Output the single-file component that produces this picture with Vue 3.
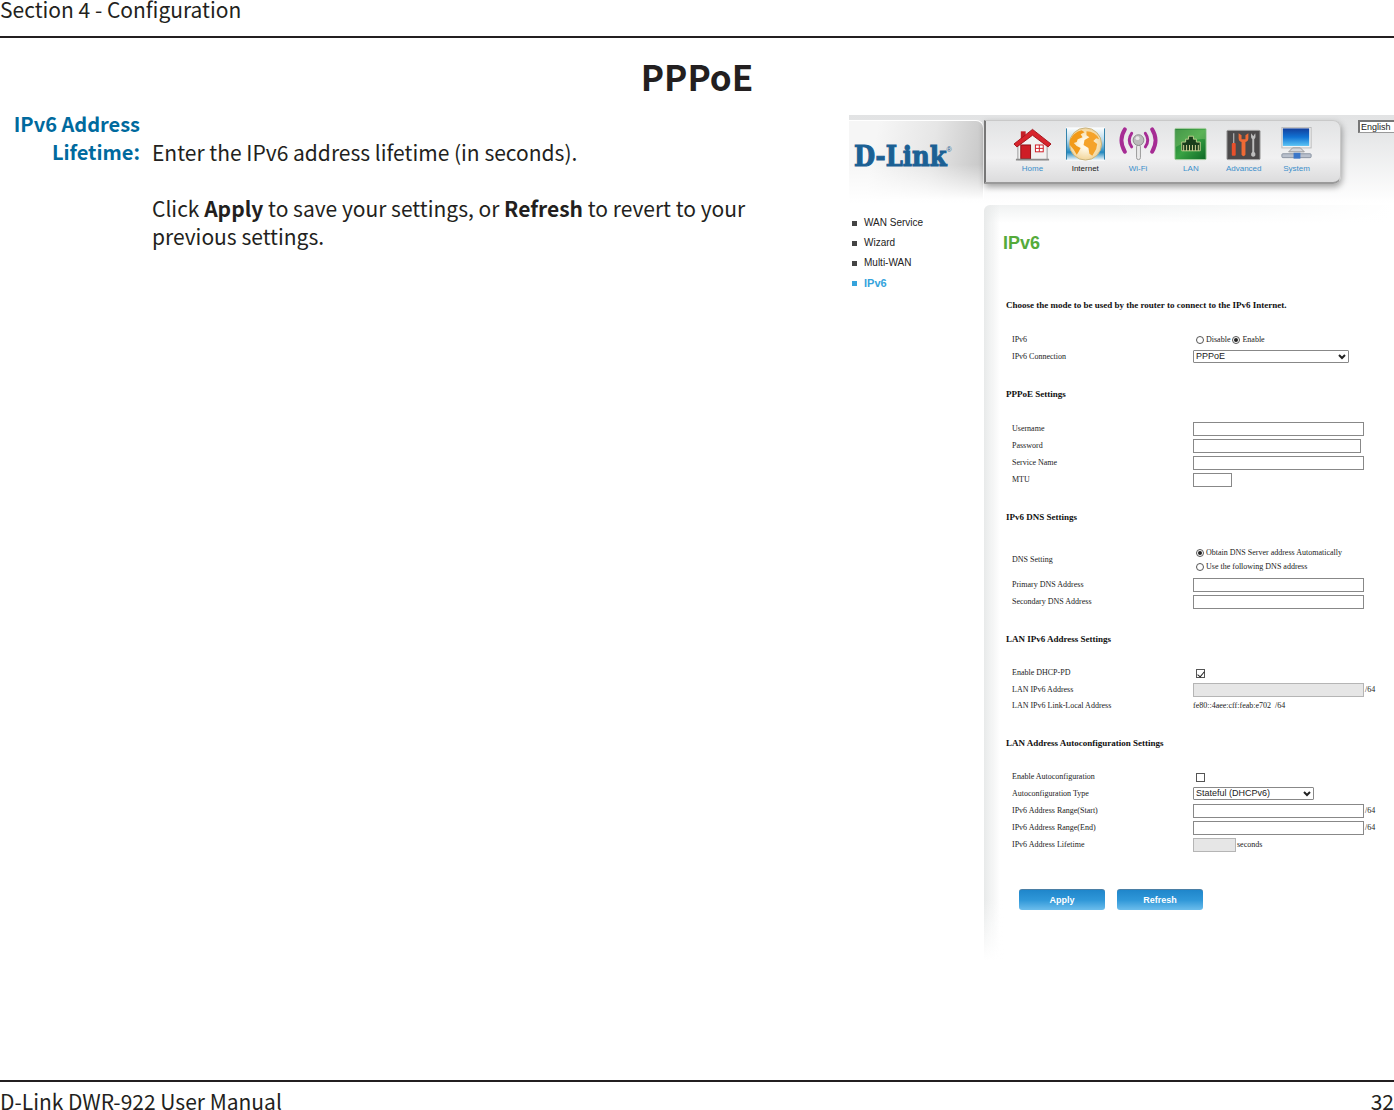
<script setup>
import { ref } from 'vue'

const menu = [
  { id: 'home', label: 'Home' },
  { id: 'internet', label: 'Internet', active: true },
  { id: 'wifi', label: 'Wi-Fi' },
  { id: 'lan', label: 'LAN' },
  { id: 'advanced', label: 'Advanced' },
  { id: 'system', label: 'System' },
]

const side = [
  { label: 'WAN Service' },
  { label: 'Wizard' },
  { label: 'Multi-WAN' },
  { label: 'IPv6', active: true },
]

const ipv6 = ref('enable')
const dns = ref('auto')
const dhcpPd = ref(true)
const autoconf = ref(false)
</script>

<template>
  <div class="page">
    <header class="page-head">Section 4 - Configuration</header>

    <h1 class="title">PPPoE</h1>

    <main class="body">
      <dl class="help">
        <dt>IPv6 Address Lifetime:</dt>
        <dd>
          <p>Enter the IPv6 address lifetime (in seconds).</p>
          <p>
            Click <strong>Apply</strong> to save your settings, or
            <strong>Refresh</strong> to revert to your previous settings.
          </p>
        </dd>
      </dl>

      <section class="router">
        <div class="banner">
          <div class="brand"><span class="brand-name">D-Link</span><span class="reg">®</span></div>
          <nav class="menu">
            <a v-for="m in menu" :key="m.id" href="#" :class="['menu-item', { on: m.active }]">
              <svg v-if="m.id === 'home'" viewBox="0 0 40 34" class="ico">
                <path d="M5 17 L20 5 L35 17 V33 H5Z" fill="#f1f1f1" stroke="#999" stroke-width="1" />
                <path d="M8 4h5v8H8z" fill="#c51f27" />
                <path d="M1 17 L20 2 L39 17 L36 20 L20 8 L4 20Z" fill="#d8232c" stroke="#a3161d" stroke-width="1" />
                <rect x="8" y="18" width="10" height="14" fill="#cf1d26" stroke="#8f1016" />
                <rect x="23" y="18" width="8" height="7" fill="#fff" stroke="#cf1d26" />
                <path d="M27 18v7M23 21.500h8" stroke="#cf1d26" fill="none" />
                <path d="M3 33h34" stroke="#8b8b8b" stroke-width="2" />
              </svg>
              <svg v-else-if="m.id === 'internet'" viewBox="0 0 40 34" class="ico">
                <defs>
                  <linearGradient id="sea" x1="0" y1="0" x2="0" y2="1">
                    <stop offset="0" stop-color="#fff" /><stop offset=".4" stop-color="#b5d8ea" /><stop offset=".75" stop-color="#2389c0" /><stop offset="1" stop-color="#fff" />
                  </linearGradient>
                  <radialGradient id="globe"><stop offset=".3" stop-color="#fff8e6" /><stop offset="1" stop-color="#f2d59a" /></radialGradient>
                </defs>
                <rect x="0" y="0" width="40" height="34" fill="url(#sea)" />
                <path d="M.5 1v32M39.500 1v32" stroke="#2c7ea9" />
                <circle cx="20" cy="17" r="16.500" fill="url(#globe)" stroke="#c9b27b" />
                <path d="M4 13 Q8 5 16 3 L19 5 15 7 17 10 12 12 11 15 8 16 11 19 15 21 13 25 11 28 8 23 4 18Z" fill="#f29a18" />
                <path d="M21 4 Q30 4 34 12 L31 11 28 14 32 17 31 22 27 29 24 27 23 21 18 18 19 13 24 10 21 8Z" fill="#f5a32a" />
              </svg>
              <svg v-else-if="m.id === 'wifi'" viewBox="0 0 40 34" class="ico">
                <g fill="none" stroke="#a62c94" stroke-linecap="round">
                  <path d="M13 6 Q8 13 13 20" stroke-width="3" /><path d="M27 6 Q32 13 27 20" stroke-width="3" />
                  <path d="M6 2 Q-1 13 6 25" stroke-width="4" /><path d="M34 2 Q41 13 34 25" stroke-width="4" />
                </g>
                <rect x="18" y="18" width="4" height="15" rx="2" fill="#e9e9e9" stroke="#999" />
                <circle cx="20" cy="13" r="5.500" fill="#bcbcbc" stroke="#8c8c8c" />
                <circle cx="19" cy="11" r="2" fill="#e8e8e8" />
              </svg>
              <svg v-else-if="m.id === 'lan'" viewBox="0 0 40 34" class="ico">
                <defs>
                  <linearGradient id="port" x1="0" y1="0" x2="1" y2="1">
                    <stop offset="0" stop-color="#15752c" /><stop offset=".5" stop-color="#39a243" /><stop offset="1" stop-color="#0d6825" />
                  </linearGradient>
                </defs>
                <rect x="4" y="1" width="32" height="32" rx="1" fill="url(#port)" stroke="#a8cfa0" />
                <path d="M5 2h30v10Q20 11 5 20Z" fill="#9ed37a" opacity=".35" />
                <path d="M11 24V15h4v-3h3V9h5v3h3v3h4v9Z" fill="#193d1c" stroke="#b9cf8a" />
                <path d="M13 24v-6M16 24v-6M19 24v-6M22 24v-6M25 24v-6M28 24v-6" stroke="#d8d79a" stroke-width="1" />
              </svg>
              <svg v-else-if="m.id === 'advanced'" viewBox="0 0 40 34" class="ico">
                <rect x="3" y="3" width="34" height="30" rx="1" fill="#4c4a4b" stroke="#a5a5a5" />
                <path d="M10 6v11" stroke="#ccc" stroke-width="1" /><rect x="8" y="16" width="4" height="13" rx="1" fill="#e8502b" />
                <path d="M15 6v5q0 3 3 4v13q2 3 4 0V15q3-1 3-4V6l-3 2v4h-4V8Z" fill="#ef6a35" />
                <path d="M28 6q-1 5 1 6v13q-2 2-1 4 2 2 4 0 1-2-1-4V12q2-1 1-6l-2 3Z" fill="#bdbdbd" />
              </svg>
              <svg v-else viewBox="0 0 40 34" class="ico">
                <defs>
                  <linearGradient id="screen" x1="0" y1="0" x2="0" y2="1">
                    <stop offset="0" stop-color="#123f9c" /><stop offset=".5" stop-color="#1173d4" /><stop offset="1" stop-color="#5cc4f4" />
                  </linearGradient>
                </defs>
                <rect x="5" y="0" width="30" height="21" fill="#f3f3f3" stroke="#bbb" />
                <rect x="6" y="1" width="27" height="18" fill="url(#screen)" />
                <path d="M16 21h8l4 4H12Z" fill="#d5d7dc" stroke="#999" />
                <rect x="5" y="27" width="30" height="4" rx="1" fill="#b9c0cc" stroke="#8b94a2" />
                <rect x="17" y="26" width="7" height="6" fill="#3d77c8" />
              </svg>
              <span>{{ m.label }}</span>
            </a>
          </nav>
          <div class="lang">
            <select aria-label="Language"><option>English</option></select>
          </div>
        </div>

        <div class="columns">
          <ul class="side">
            <li v-for="s in side" :key="s.label" :class="{ on: s.active }">
              <a href="#">{{ s.label }}</a>
            </li>
          </ul>

          <form class="panel" @submit.prevent>
            <h2>IPv6</h2>

            <h3>Choose the mode to be used by the router to connect to the IPv6 Internet.</h3>
            <div class="row">
              <span class="name">IPv6</span>
              <span class="choice">
                <label><input v-model="ipv6" type="radio" name="ipv6" value="disable" />Disable</label>
                <label><input v-model="ipv6" type="radio" name="ipv6" value="enable" />Enable</label>
              </span>
            </div>
            <div class="row">
              <label class="name" for="conn">IPv6 Connection</label>
              <span class="drop drop-wide">
                <select id="conn"><option>PPPoE</option></select>
                <svg viewBox="0 0 9 7"><path d="M1 2l3 3 3-3" /></svg>
              </span>
            </div>

            <h3>PPPoE Settings</h3>
            <div class="row"><label class="name" for="user">Username</label><input id="user" type="text" class="box" /></div>
            <div class="row"><label class="name" for="pass">Password</label><input id="pass" type="password" class="box box-pass" /></div>
            <div class="row"><label class="name" for="svc">Service Name</label><input id="svc" type="text" class="box" /></div>
            <div class="row"><label class="name" for="mtu">MTU</label><input id="mtu" type="text" class="box box-mtu" /></div>

            <h3>IPv6 DNS Settings</h3>
            <div class="row row-dns">
              <span class="name">DNS Setting</span>
              <span class="choice stacked">
                <label><input v-model="dns" type="radio" name="dns" value="auto" />Obtain DNS Server address Automatically</label>
                <label><input v-model="dns" type="radio" name="dns" value="manual" />Use the following DNS address</label>
              </span>
            </div>
            <div class="row"><label class="name" for="dns1">Primary DNS Address</label><input id="dns1" type="text" class="box" /></div>
            <div class="row"><label class="name" for="dns2">Secondary DNS Address</label><input id="dns2" type="text" class="box" /></div>

            <h3>LAN IPv6 Address Settings</h3>
            <div class="row short"><label class="name" for="pd">Enable DHCP-PD</label><input id="pd" v-model="dhcpPd" type="checkbox" /></div>
            <div class="row"><label class="name" for="lan6">LAN IPv6 Address</label><input id="lan6" type="text" class="box" disabled /><span class="unit">/64</span></div>
            <div class="row short"><span class="name">LAN IPv6 Link-Local Address</span><span>fe80::4aee:cff:feab:e702&nbsp; /64</span></div>

            <h3>LAN Address Autoconfiguration Settings</h3>
            <div class="row short"><label class="name" for="auto">Enable Autoconfiguration</label><input id="auto" v-model="autoconf" type="checkbox" /></div>
            <div class="row">
              <label class="name" for="type">Autoconfiguration Type</label>
              <span class="drop">
                <select id="type"><option>Stateful (DHCPv6)</option></select>
                <svg viewBox="0 0 9 7"><path d="M1 2l3 3 3-3" /></svg>
              </span>
            </div>
            <div class="row"><label class="name" for="start">IPv6 Address Range(Start)</label><input id="start" type="text" class="box" /><span class="unit">/64</span></div>
            <div class="row"><label class="name" for="end">IPv6 Address Range(End)</label><input id="end" type="text" class="box" /><span class="unit">/64</span></div>
            <div class="row"><label class="name" for="life">IPv6 Address Lifetime</label><input id="life" type="text" class="box box-life" disabled /><span class="unit">seconds</span></div>

            <div class="actions">
              <button type="submit">Apply</button>
              <button type="button">Refresh</button>
            </div>
          </form>
        </div>
      </section>
    </main>

    <footer class="page-foot"><span>D-Link DWR-922 User Manual</span><span>32</span></footer>
  </div>
</template>

<style>
body {
  margin: 0;
  background: #fff;
}
</style>

<style scoped>
* {
  box-sizing: border-box;
}
.page {
  display: flex;
  flex-direction: column;
  min-height: 100vh;
  overflow: hidden;
  color: #231f20;
  font: 21px/28px "Noto Sans CJK SC", "Open Sans", sans-serif;
}
.page-head {
  height: 38px;
  line-height: 18px;
  border-bottom: 2px solid #231f20;
}
.title {
  margin: 18px 0 14px;
  font-size: 35px;
  line-height: 40px;
  font-weight: 700;
  text-align: center;
}
.body {
  display: grid;
  grid-template-columns: 1fr 545px;
  flex: 1;
}
.help {
  display: grid;
  grid-template-columns: 140px 1fr;
  column-gap: 12px;
  align-content: start;
  margin: 0;
  padding-right: 90px;
}
.help dt {
  color: #006a9e;
  font-size: 20px;
  font-weight: 700;
  text-align: right;
}
.help dd {
  margin: 28px 0 0;
}
.help p {
  margin: 0 0 28px;
}
.page-foot {
  display: flex;
  justify-content: space-between;
  height: 30px;
  padding-top: 5px;
  border-top: 2px solid #231f20;
  line-height: 28px;
}

/* router web page */
.router {
  padding-top: 5px;
  font: 8px/12px "Liberation Serif", serif;
  color: #222;
}
.router a {
  color: inherit;
  text-decoration: none;
}
.banner {
  display: flex;
  align-items: flex-start;
  height: 90px;
  padding-top: 5px;
  background: linear-gradient(#e2e3e4 0, #e6e7e8 20px, #fff 88px);
  font-family: "Liberation Sans", sans-serif;
}
.brand {
  display: flex;
  width: 135px;
  height: 80px;
  padding: 20px 0 0 5px;
  border-top: 1px solid #fff;
  border-right: 1px solid #fff;
  border-top-right-radius: 8px;
  background:
    linear-gradient(rgba(255, 255, 255, 0) 55%, #fff),
    linear-gradient(100deg, #f6f6f6 20%, #e6e6e6 60%, #c4c4c4);
  color: #1b6094;
}
.brand-name {
  font: bold 27px/32px "DejaVu Serif Condensed", "DejaVu Serif", serif;
  -webkit-text-stroke: 1px #1b6094;
}
.reg {
  font-size: 7px;
  line-height: 18px;
}
.menu {
  display: flex;
  width: 357px;
  height: 64px;
  padding: 5px 17px 0 20px;
  border: 1px solid #c9c9c9;
  border-left: 2px solid #777;
  border-bottom: 2px solid #9a9a9a;
  border-radius: 0 8px 8px 0;
  background: linear-gradient(#e2e3e4, #f1f1f2 60%, #dcdcdd);
  box-shadow: 1px 3px 6px rgba(0, 0, 0, 0.35);
}
.menu-item {
  display: flex;
  flex: 1;
  flex-direction: column;
  align-items: center;
  line-height: 16px;
}
.router .menu-item {
  color: #3b8fcb;
}
.router .menu-item.on {
  color: #222;
}
.ico {
  width: 39px;
  height: 34px;
  margin-top: 1px;
}
.lang {
  flex: 1;
  margin-left: 17px;
  overflow: hidden;
}
.lang select {
  display: block;
  width: 60px;
  height: 13px;
  padding: 0 1px;
  border: 1px solid #999;
  border-top: 2px solid #777;
  border-left: 2px solid #777;
  border-radius: 0;
  background: #fff;
  appearance: none;
  font: 9px/10px "Liberation Sans", sans-serif;
  color: #222;
}
.columns {
  display: flex;
}
.side {
  width: 135px;
  margin: 0;
  padding: 8px 0 0 3px;
  list-style: none;
  font: 10px/20px "Liberation Sans", sans-serif;
}
.side li {
  display: flex;
  align-items: center;
  gap: 7px;
  height: 20px;
}
.side li::before {
  content: "";
  width: 5px;
  height: 5px;
  background: #444;
}
.side .on {
  color: #35a3dc;
  font-size: 11px;
  font-weight: 700;
}
.side .on::before {
  background: #35a3dc;
}
.panel {
  flex: 1;
  padding: 28px 0 50px 22px;
  border-top-left-radius: 6px;
  background:
    linear-gradient(rgba(255, 255, 255, 0) 92%, #fff) 0 0 / 20px 100% no-repeat,
    linear-gradient(90deg, rgba(255, 255, 255, 0) 30%, #fff) 0 0 / 100% 18px no-repeat,
    linear-gradient(90deg, #e8eaea, rgba(255, 255, 255, 0)) 0 0 / 16px 100% no-repeat,
    linear-gradient(#f0f2f2, #fff) 0 0 / 100% 18px no-repeat;
}
.panel h2 {
  margin: 0 0 42px -3px;
  font: bold 18px/20px "Liberation Sans", sans-serif;
  color: #55ab3b;
}
.panel h3 {
  margin: 19px 0 16px;
  font-size: 9px;
  line-height: 20px;
  color: #111;
}
.panel h2 + h3 {
  margin-top: 0;
}
.row {
  display: flex;
  align-items: center;
  height: 17px;
  padding-left: 6px;
}
.row.short {
  height: 16px;
}
.row-dns {
  height: 33px;
}
.name {
  width: 181px;
}
.box {
  width: 171px;
  height: 14px;
  padding: 0 2px;
  border: 1px solid #888;
  border-radius: 0;
  background: #fff;
  font: 9px/12px "Liberation Sans", sans-serif;
}
.box:disabled {
  border-color: #b5b5b5;
  background: #e6e6e6;
}
.box-pass {
  width: 168px;
}
.box-mtu {
  width: 39px;
}
.box-life {
  width: 43px;
}
.unit {
  padding-left: 1px;
}
.choice {
  display: flex;
  gap: 2px;
  padding-left: 3px;
}
.stacked {
  flex-direction: column;
}
.choice label {
  display: flex;
  align-items: center;
  gap: 2px;
}
input[type="radio"],
input[type="checkbox"] {
  display: grid;
  place-items: center;
  width: 8px;
  height: 8px;
  margin: 0;
  border: 1px solid #555;
  background: #fff;
  appearance: none;
}
input[type="radio"] {
  border-radius: 50%;
}
input[type="radio"]:checked::before {
  content: "";
  width: 4px;
  height: 4px;
  border-radius: 50%;
  background: #222;
}
input[type="checkbox"] {
  width: 9px;
  height: 9px;
  margin-left: 3px;
}
input[type="checkbox"]:checked::before {
  content: "";
  width: 3px;
  height: 6px;
  border: solid #222;
  border-width: 0 1px 1px 0;
  transform: rotate(40deg);
}
.drop {
  position: relative;
  width: 121px;
  height: 13px;
}
.drop-wide {
  width: 156px;
}
.drop select {
  display: block;
  width: 100%;
  height: 13px;
  padding: 0 2px;
  border: 1px solid #888;
  border-radius: 1px;
  background: #fff;
  appearance: none;
  font: 9px/11px "Liberation Sans", sans-serif;
  color: #222;
}
.drop svg {
  position: absolute;
  top: 3px;
  right: 2px;
  width: 9px;
  height: 7px;
  fill: none;
  stroke: #222;
  stroke-width: 2;
  pointer-events: none;
}
.actions {
  display: flex;
  gap: 12px;
  margin: 36px 0 0 13px;
}
.actions button {
  width: 86px;
  height: 21px;
  padding: 0;
  border: 0;
  border-top: 1px solid #4b7fa5;
  border-radius: 3px;
  background: linear-gradient(#1f86cb, #2f97d8 50%, #6cbdec);
  color: #fff;
  font: bold 9px/20px "Liberation Sans", sans-serif;
}
</style>
